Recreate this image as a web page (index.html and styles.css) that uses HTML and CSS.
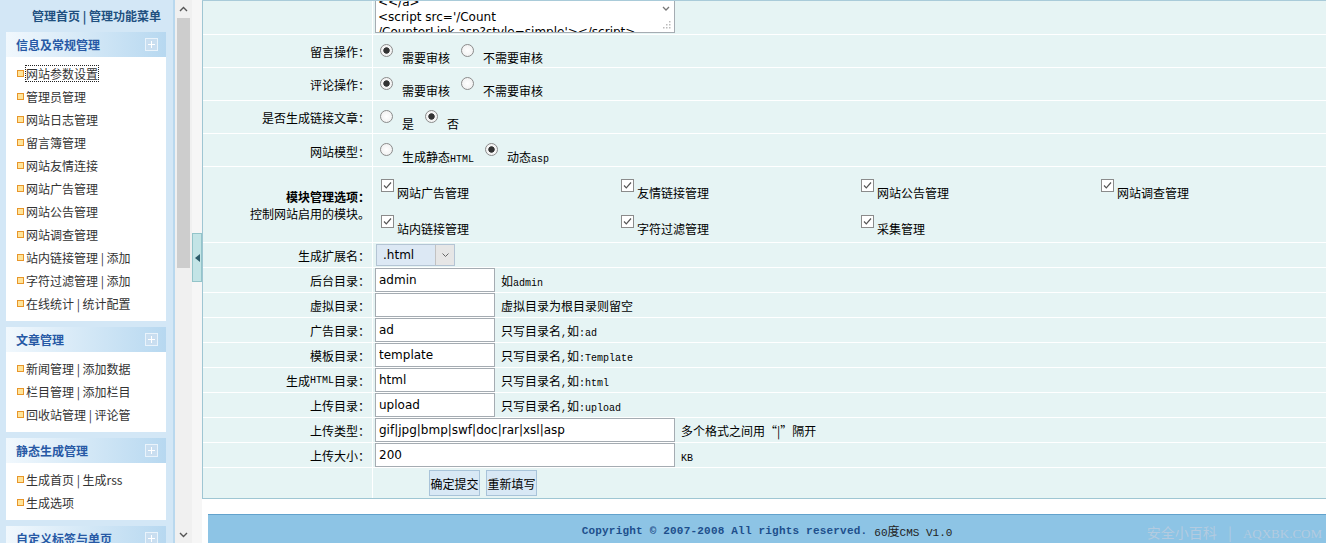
FILE: index.html
```html
<!DOCTYPE html>
<html lang="zh-CN">
  <head>
    <meta charset="UTF-8" />
    <title>网站参数设置</title>
    <link rel="stylesheet" href="styles.css">
  </head>
  <body>
    <div class="frame">
      <!-- left menu frame -->
      <aside class="menu">
        <div class="menu-title">管理首页 | 管理功能菜单</div>

        <div class="panel">
          <div class="panel-head"><span>信息及常规管理</span><i class="plus"></i></div>
          <ul class="panel-list">
            <li><span class="focus">网站参数设置</span></li>
            <li>管理员管理</li>
            <li>网站日志管理</li>
            <li>留言簿管理</li>
            <li>网站友情连接</li>
            <li>网站广告管理</li>
            <li>网站公告管理</li>
            <li>网站调查管理</li>
            <li>站内链接管理 | 添加</li>
            <li>字符过滤管理 | 添加</li>
            <li>在线统计 | 统计配置</li>
          </ul>
        </div>

        <div class="panel">
          <div class="panel-head"><span>文章管理</span><i class="plus"></i></div>
          <ul class="panel-list">
            <li>新闻管理 | 添加数据</li>
            <li>栏目管理 | 添加栏目</li>
            <li>回收站管理 | 评论管</li>
          </ul>
        </div>

        <div class="panel">
          <div class="panel-head"><span>静态生成管理</span><i class="plus"></i></div>
          <ul class="panel-list">
            <li>生成首页 | 生成rss</li>
            <li>生成选项</li>
          </ul>
        </div>

        <div class="panel">
          <div class="panel-head"><span>自定义标签与单页</span><i class="plus"></i></div>
        </div>
      </aside>

      <div class="menu-scroll">
        <span class="sb-arrow">
          <svg width="9" height="6" viewBox="0 0 9 6"><path d="M1 5L4.5 1.5L8 5" fill="none" stroke="#555" stroke-width="1.4"/></svg>
        </span>
        <span class="sb-track"><span class="sb-thumb"></span></span>
        <span class="sb-arrow">
          <svg width="9" height="6" viewBox="0 0 9 6"><path d="M1 1L4.5 4.5L8 1" fill="none" stroke="#555" stroke-width="1.4"/></svg>
        </span>
      </div>

      <div class="splitter">
        <span class="split-btn">
          <svg width="5" height="8" viewBox="0 0 5 8"><path d="M5 0L0 4L5 8Z" fill="#2d5b6a"/></svg>
        </span>
      </div>

      <!-- main frame (scrolled) -->
      <main class="main">
        <div class="scroll-view">
          <form class="form-table">
            <div class="row area">
              <div class="lbl"></div>
              <div class="val top">
                <div class="code">
                  <div class="code-text">
                    <div>&lt;a href='/' target='_blank'&gt;</div>
                    <div>&lt;&lt;/a&gt;</div>
                    <div>&lt;script src='/Count</div>
                    <div>/CounterLink.asp?style=simple'&gt;&lt;/script&gt;</div>
                  </div>
                  <div class="code-bar">
                    <span class="code-down">
                      <svg width="8" height="5" viewBox="0 0 8 5"><path d="M1 1L4 4L7 1" fill="none" stroke="#777" stroke-width="1.3"/></svg>
                    </span>
                    <span class="code-grip">
                      <svg width="8" height="8" viewBox="0 0 8 8" fill="#bbb"><rect x="6" y="0" width="1.5" height="1.5"/><rect x="3" y="3" width="1.5" height="1.5"/><rect x="6" y="3" width="1.5" height="1.5"/><rect x="0" y="6" width="1.5" height="1.5"/><rect x="3" y="6" width="1.5" height="1.5"/><rect x="6" y="6" width="1.5" height="1.5"/></svg>
                    </span>
                  </div>
                </div>
              </div>
            </div>

            <div class="row opt-row">
              <div class="lbl">留言操作：</div>
              <div class="val top">
                <label class="opt"><input type="radio" class="radio" name="gb" checked><span>需要审核</span></label>
                <label class="opt"><input type="radio" class="radio" name="gb"><span>不需要审核</span></label>
              </div>
            </div>

            <div class="row opt-row">
              <div class="lbl">评论操作：</div>
              <div class="val top">
                <label class="opt"><input type="radio" class="radio" name="cm" checked><span>需要审核</span></label>
                <label class="opt"><input type="radio" class="radio" name="cm"><span>不需要审核</span></label>
              </div>
            </div>

            <div class="row opt-row">
              <div class="lbl">是否生成链接文章：</div>
              <div class="val top">
                <label class="opt"><input type="radio" class="radio" name="lk"><span>是</span></label>
                <label class="opt"><input type="radio" class="radio" name="lk" checked><span>否</span></label>
              </div>
            </div>

            <div class="row opt-row">
              <div class="lbl">网站模型：</div>
              <div class="val top">
                <label class="opt"><input type="radio" class="radio" name="md"><span>生成静态<b class="m">HTML</b></span></label>
                <label class="opt"><input type="radio" class="radio" name="md" checked><span>动态<b class="m">asp</b></span></label>
              </div>
            </div>

            <div class="row mod-row">
              <div class="lbl two">
                <strong>模块管理选项：</strong>
                <span>控制网站启用的模块。</span>
              </div>
              <div class="val top">
                <div class="mods">
                  <label class="mod"><input type="checkbox" class="check" checked><span>网站广告管理</span></label>
                  <label class="mod"><input type="checkbox" class="check" checked><span>友情链接管理</span></label>
                  <label class="mod"><input type="checkbox" class="check" checked><span>网站公告管理</span></label>
                  <label class="mod"><input type="checkbox" class="check" checked><span>网站调查管理</span></label>
                  <label class="mod"><input type="checkbox" class="check" checked><span>站内链接管理</span></label>
                  <label class="mod"><input type="checkbox" class="check" checked><span>字符过滤管理</span></label>
                  <label class="mod"><input type="checkbox" class="check" checked><span>采集管理</span></label>
                </div>
              </div>
            </div>

            <div class="row field">
              <div class="lbl">生成扩展名：</div>
              <div class="val">
                <span class="select">
                  <select>
                    <option>.html</option>
                    <option>.htm</option>
                    <option>.shtml</option>
                  </select>
                  <span class="select-btn">
                    <svg width="7" height="4" viewBox="0 0 7 4"><path d="M0.5 0.5L3.5 3.5L6.5 0.5" fill="none" stroke="#666" stroke-width="1"/></svg>
                  </span>
                </span>
              </div>
            </div>

            <div class="row field">
              <div class="lbl">后台目录：</div>
              <div class="val">
                <input type="text" class="txt" value="admin">
                <span class="note">如<b class="m">admin</b></span>
              </div>
            </div>

            <div class="row field">
              <div class="lbl">虚拟目录：</div>
              <div class="val">
                <input type="text" class="txt" value="">
                <span class="note">虚拟目录为根目录则留空</span>
              </div>
            </div>

            <div class="row field">
              <div class="lbl">广告目录：</div>
              <div class="val">
                <input type="text" class="txt" value="ad">
                <span class="note">只写目录名<b class="m">,</b>如<b class="m">:ad</b></span>
              </div>
            </div>

            <div class="row field">
              <div class="lbl">模板目录：</div>
              <div class="val">
                <input type="text" class="txt" value="template">
                <span class="note">只写目录名<b class="m">,</b>如<b class="m">:Template</b></span>
              </div>
            </div>

            <div class="row field">
              <div class="lbl">生成<b class="m">HTML</b>目录：</div>
              <div class="val">
                <input type="text" class="txt" value="html">
                <span class="note">只写目录名<b class="m">,</b>如<b class="m">:html</b></span>
              </div>
            </div>

            <div class="row field">
              <div class="lbl">上传目录：</div>
              <div class="val">
                <input type="text" class="txt" value="upload">
                <span class="note">只写目录名<b class="m">,</b>如<b class="m">:upload</b></span>
              </div>
            </div>

            <div class="row field">
              <div class="lbl">上传类型：</div>
              <div class="val">
                <input type="text" class="txt wide" value="gif|jpg|bmp|swf|doc|rar|xsl|asp">
                <span class="note">多个格式之间用“|”隔开</span>
              </div>
            </div>

            <div class="row field">
              <div class="lbl">上传大小：</div>
              <div class="val">
                <input type="text" class="txt wide" value="200">
                <span class="note"><b class="m">KB</b></span>
              </div>
            </div>

            <div class="row btn-row">
              <div class="lbl"></div>
              <div class="val buttons">
                <button type="submit" class="btn">确定提交</button>
                <button type="reset" class="btn">重新填写</button>
              </div>
            </div>
          </form>

          <div class="footer">
            <span class="copy">Copyright © 2007-2008 All rights reserved.</span>
            <span class="ver"><b class="fm">60</b>度<b class="fm">CMS V1.0</b></span>
            <span class="mark">安全小百科 <i>|</i> <em>AQXBK.COM</em></span>
          </div>
        </div>
      </main>
    </div>
  </body>
</html>
```

FILE: styles.css
```css
* {
  box-sizing: border-box;
}

body {
  margin: 0;
  font-family: "Noto Sans CJK SC", "Liberation Sans", sans-serif;
  font-size: 12px;
  color: #000;
  background: #fff;
  overflow: hidden;
}

.frame {
  display: flex;
  height: 543px;
  overflow: hidden;
}

/* left menu */
.menu {
  width: 175px;
  flex: none;
  background: #d3e7f6;
  padding: 0 7px 0 6px;
  overflow: hidden;
  border-right: 2px solid #b9d8ee;
}

.menu-title {
  height: 32px;
  line-height: 32px;
  text-align: right;
  padding-right: 5px;
  font-weight: bold;
  color: #21507f;
}

.panel {
  background: #fff;
  margin-bottom: 6px;
}

.panel-head {
  height: 25px;
  display: flex;
  align-items: center;
  justify-content: space-between;
  padding: 0 8px 0 10px;
  background: linear-gradient(to right, #f1f8fd, #b7d8f0);
  color: #2759a5;
  font-weight: bold;
}

.plus {
  width: 13px;
  height: 13px;
  border: 1px solid #e9f3fb;
  background:
    linear-gradient(#fff, #fff) center / 7px 1px no-repeat,
    linear-gradient(#fff, #fff) center / 1px 7px no-repeat,
    #c9def0;
}

.panel-list {
  list-style: none;
  margin: 0;
  padding: 5px 0 6px;
}

.panel-list li {
  height: 23px;
  display: flex;
  align-items: center;
  padding-left: 11px;
  color: #333;
  white-space: nowrap;
}

.panel-list li::before {
  content: "";
  width: 5px;
  height: 5px;
  margin-right: 2px;
  border: 1px solid #e8962a;
  background: #ffe49a;
  flex: none;
}

.focus {
  outline: 1px dotted #222;
  line-height: 15px;
}

/* menu scrollbar and splitter */
.menu-scroll {
  width: 17px;
  flex: none;
  display: flex;
  flex-direction: column;
  background: #f0f0f0;
}

.sb-arrow {
  height: 17px;
  flex: none;
  display: flex;
  align-items: center;
  justify-content: center;
}

.sb-track {
  flex: 1;
  padding: 1px 2px;
}

.sb-thumb {
  display: block;
  height: 250px;
  background: #cdcdcd;
}

.splitter {
  width: 10px;
  flex: none;
  background: #f6f6f6;
  padding-top: 233px;
}

.split-btn {
  height: 49px;
  display: flex;
  align-items: center;
  justify-content: center;
  background: #c3e4e6;
  border: 1px solid #93c4c9;
}

/* main frame */
.main {
  flex: 1;
  min-width: 0;
  overflow: hidden;
  border-top: 1px solid #a9cbd9;
  background: #fff;
}

.scroll-view {
  margin-top: -31px;
}

.form-table {
  margin: 0;
  background: #e6f4f4;
  border-left: 1px solid #9fc6d3;
  border-bottom: 1px solid #9fc6d3;
}

.row {
  display: grid;
  grid-template-columns: 170px 1fr;
  border-bottom: 1px solid #fff;
}

.row.area { height: 65px; }
.row.opt-row { height: 33px; }
.row.mod-row { height: 76px; }
.row.field { height: 25px; }
.row.btn-row { height: 30px; border-bottom: 0; }

.lbl {
  display: flex;
  align-items: center;
  justify-content: flex-end;
  padding-right: 2px;
  border-right: 1px solid #fff;
  white-space: nowrap;
}

.lbl.two {
  flex-direction: column;
  justify-content: center;
  align-items: flex-end;
  line-height: 17px;
}

.val {
  display: flex;
  align-items: center;
  min-width: 0;
  white-space: nowrap;
}

.val.top {
  align-items: flex-start;
}

.m {
  font-family: "Liberation Mono", monospace;
  font-size: 10px;
  font-weight: normal;
}

/* fake textarea (scrolled) */
.code {
  display: flex;
  width: 300px;
  height: 62px;
  margin: 1px 0 0 2px;
  border: 1px solid #a5acb2;
  background: #fff;
}

.code-text {
  flex: 1;
  overflow: hidden;
  padding: 8px 2px 0;
  font-family: "DejaVu Sans", sans-serif;
  font-size: 12px;
  line-height: 15px;
}

.code-bar {
  width: 17px;
  display: flex;
  flex-direction: column;
  justify-content: flex-end;
}

.code-down {
  height: 17px;
  display: flex;
  align-items: center;
  justify-content: center;
}

.code-grip {
  height: 15px;
  display: flex;
  align-items: flex-end;
  justify-content: flex-end;
  padding: 0 3px 3px 0;
}

/* radios and checkboxes */
.radio,
.check {
  appearance: none;
  -webkit-appearance: none;
  width: 13px;
  height: 13px;
  margin: 0;
  flex: none;
  border: 1px solid #8b8b8b;
  background: #fff;
}

.radio {
  border-radius: 50%;
  background: radial-gradient(circle, #fff 0, #ececec 100%);
}

.radio:checked {
  background: radial-gradient(circle, #333 0, #333 2.8px, #f4f4f4 3.6px);
}

.check:checked {
  background: #fff url("data:image/svg+xml,%3Csvg xmlns='http://www.w3.org/2000/svg' width='11' height='11' viewBox='0 0 11 11'%3E%3Cpath d='M2 5.5L4.3 7.8L9 2.5' fill='none' stroke='%23555' stroke-width='1.2'/%3E%3C/svg%3E") center / 11px 11px no-repeat;
}

.opt-row .val {
  padding-left: 7px;
}

.opt {
  display: flex;
  align-items: flex-start;
  margin-right: 11px;
}

.opt input {
  margin: 9px 9px 0 0;
}

.opt span,
.mod span {
  margin-top: 15px;
  line-height: 16px;
}

.mods {
  display: grid;
  grid-template-columns: repeat(4, 240px);
  grid-auto-rows: 36px;
  padding: 3px 0 0 8px;
}

.mod {
  display: flex;
  align-items: flex-start;
}

.mod input {
  margin: 9px 3px 0 0;
}

/* fields */
.select {
  position: relative;
  display: inline-block;
  margin-left: 3px;
}

.select select {
  appearance: none;
  -webkit-appearance: none;
  display: block;
  width: 79px;
  height: 22px;
  padding: 0 0 0 6px;
  border: 1px solid #b4c4d4;
  background: #dce8f4;
  font-family: "DejaVu Sans", sans-serif;
  font-size: 12px;
  color: #000;
}

.select-btn {
  position: absolute;
  top: 1px;
  right: 1px;
  width: 19px;
  height: 20px;
  display: flex;
  align-items: center;
  justify-content: center;
  background: #e6e6e6;
  border-left: 1px solid #c2c2c2;
  pointer-events: none;
}

.txt {
  width: 120px;
  height: 24px;
  margin: 0 0 0 2px;
  padding: 0 3px;
  border: 1px solid #a5acb2;
  background: #fff;
  font-family: "DejaVu Sans", sans-serif;
  font-size: 12px;
  color: #000;
}

.txt.wide {
  width: 300px;
}

.note {
  margin-left: 6px;
}

.buttons {
  padding-left: 56px;
}

.btn {
  width: 51px;
  height: 26px;
  padding: 0;
  margin-right: 6px;
  border: 1px solid #a8c3d9;
  background: #d8e8f5;
  font-family: "Noto Sans CJK SC", sans-serif;
  font-size: 12px;
  color: #000;
}

/* footer */
.footer {
  position: relative;
  margin: 15px 0 0 6px;
  height: 40px;
  padding-bottom: 8px;
  display: flex;
  align-items: center;
  justify-content: center;
  background: #8dc4e5;
  border-top: 1px solid #62a2cc;
}

.copy {
  font-family: "Liberation Mono", monospace;
  font-size: 11px;
  font-weight: bold;
  letter-spacing: 0.2px;
  color: #1d4f8c;
}

.ver {
  margin-left: 7px;
  color: #222;
}

.fm {
  font-family: "Liberation Mono", monospace;
  font-size: 11px;
  font-weight: normal;
}

.mark {
  position: absolute;
  right: 4px;
  top: 7px;
  font-size: 14px;
  color: #b3cbe0;
}

.mark i {
  font-style: normal;
  margin: 0 8px;
}

.mark em {
  font-style: normal;
  font-family: "Liberation Serif", serif;
  font-size: 13px;
}
```
